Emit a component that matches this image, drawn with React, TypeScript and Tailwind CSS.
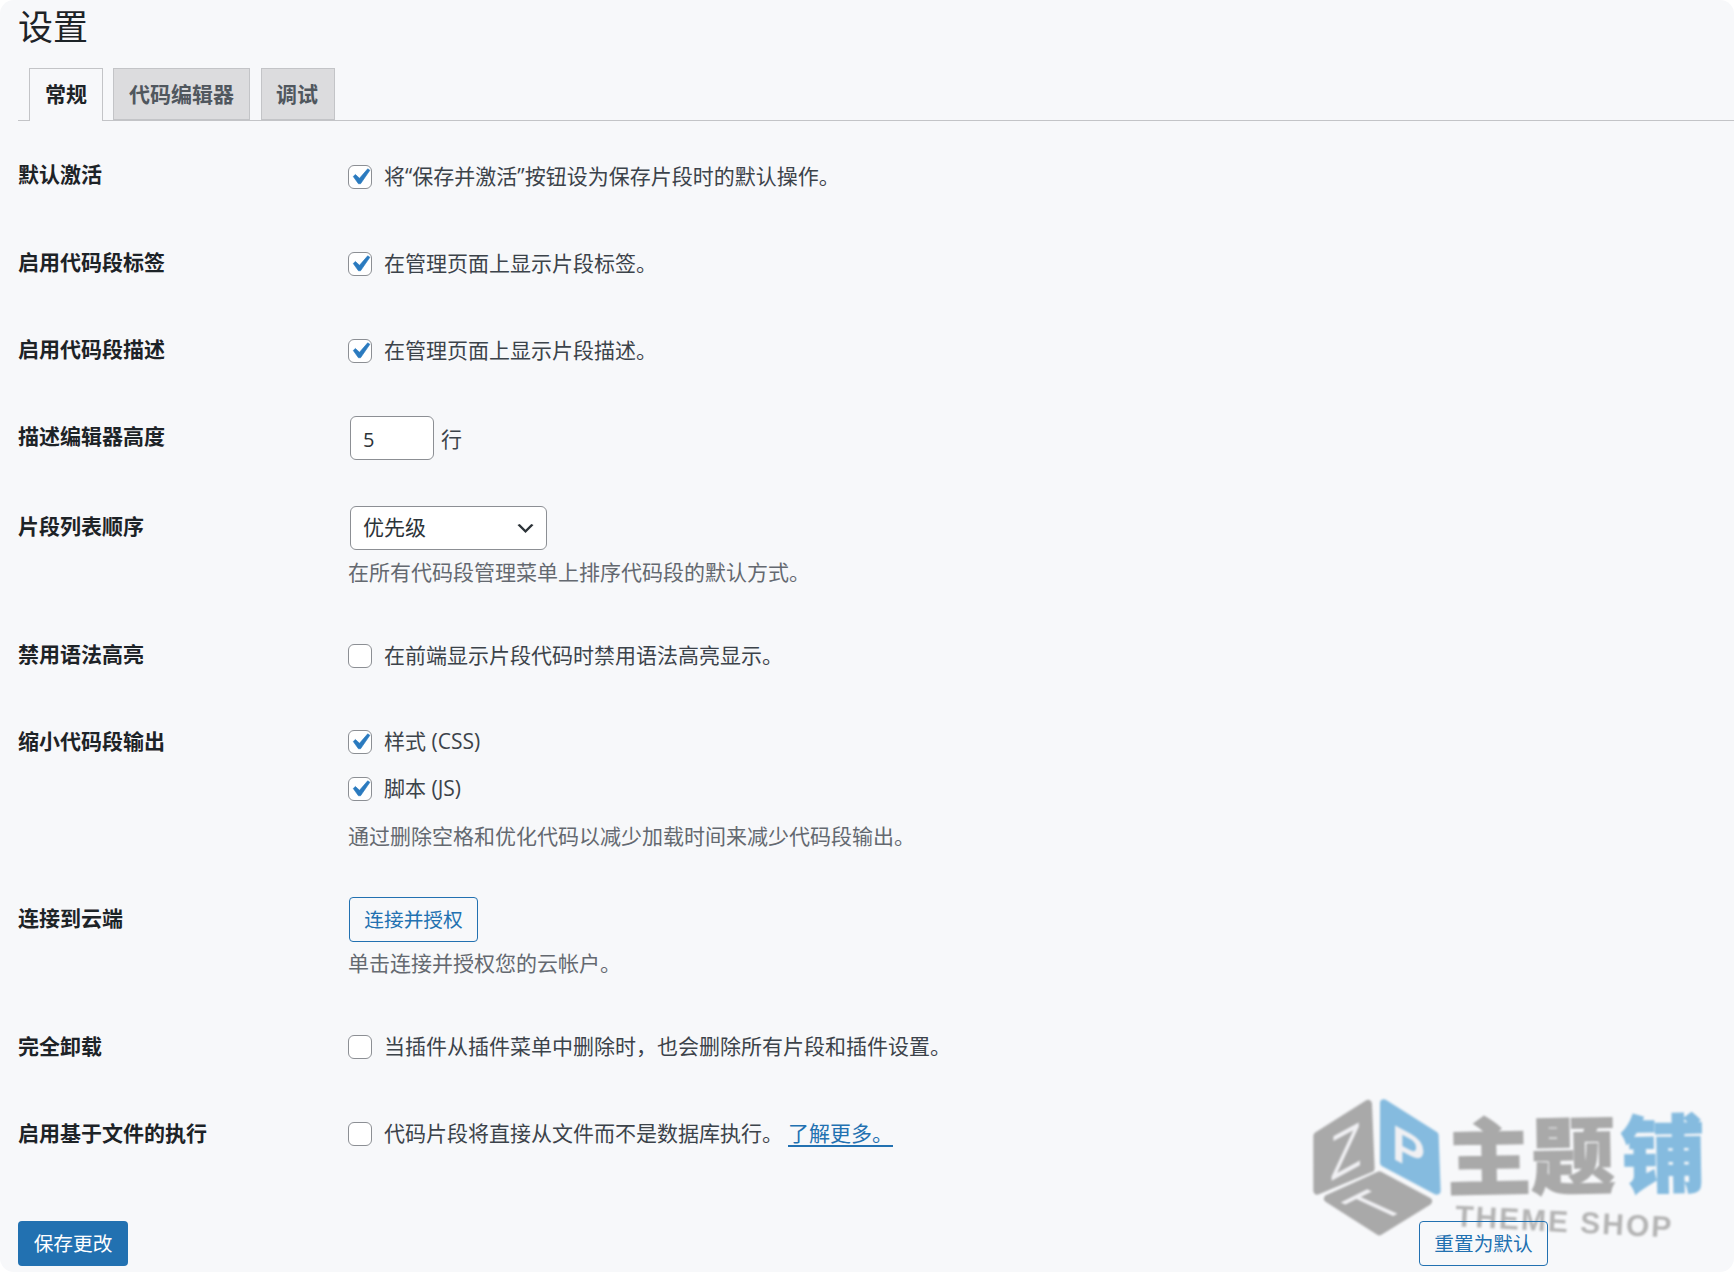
import type { ReactNode } from "react";

function Check({ on = false }: { on?: boolean }) {
  return (
    <span className="mr-[12px] flex h-[24px] w-[24px] shrink-0 items-center justify-center rounded-[6px] border border-[#8c8f94] bg-white">
      {on && (
        <svg viewBox="0 0 20 20" className="h-[32px] w-[32px] shrink-0 fill-[#2a7abf] stroke-[#2a7abf] stroke-[0.4]">
          <path d="M14.83 4.89l1.34.94-5.81 8.38H9.02L5.78 9.67l1.34-1.25 2.57 2.4z" />
        </svg>
      )}
    </span>
  );
}

function CheckLine({ on, children }: { on?: boolean; children: ReactNode }) {
  return (
    <div className="flex h-[30px] items-center text-[21px] leading-[30px] text-[#3c434a]">
      <Check on={on} />
      <span className="mb-[2px]">{children}</span>
    </div>
  );
}

function Row({
  label,
  className,
  labelClass,
  children,
}: {
  label: string;
  className: string;
  labelClass: string;
  children: ReactNode;
}) {
  return (
    <div className={`grid grid-cols-[330px_1fr] items-start ${className}`}>
      <div className={`text-[21px] font-bold leading-[30px] text-[#1d2327] ${labelClass}`}>{label}</div>
      <div>{children}</div>
    </div>
  );
}

function Help({ className, children }: { className: string; children: ReactNode }) {
  return <p className={`text-[21px] leading-[30px] text-[#646970] ${className}`}>{children}</p>;
}

function Watermark() {
  return (
    <div className="pointer-events-none absolute left-[1280px] top-[1060px] h-[212px] w-[454px] blur-[0.8px]">
      <svg viewBox="0 0 1362 636" className="absolute left-0 top-0 h-[212px] w-[454px]">
        <g strokeLinejoin="round" strokeWidth="24">
          <path d="M112 228 L264 132 L272 325 L112 392 Z" fill="#a9a9a9" stroke="#a9a9a9" />
          <path d="M312 130 L464 226 L470 392 L312 308 Z" fill="#85bbdf" stroke="#85bbdf" />
          <path d="M298 346 L444 424 L298 514 L144 416 Z" fill="#a9a9a9" stroke="#a9a9a9" />
        </g>
        <g fontFamily="'Liberation Sans', sans-serif" fontSize="100" fill="#f0f0f3">
          <text transform="matrix(1.55 -0.85 0 1.9 150 365)">Z</text>
          <text transform="matrix(1.5 0.8 0 1.5 335 294)" fontWeight="700">P</text>
          <text transform="matrix(1.4 -0.7 1.8 0.83 303 486)">T</text>
        </g>
      </svg>
      <div className="absolute left-[167px] top-[45px] flex -rotate-[1deg] text-[84px] font-black leading-[100px] [-webkit-text-stroke:1.5px_currentColor]">
        <span className="text-[#a9a9a9]">主题</span>
        <span className="ml-[6px] text-[#85bbdf]">铺</span>
      </div>
      <div className="absolute left-[175px] top-[142px] rotate-[3deg] whitespace-nowrap text-[30px] font-bold leading-[40px] tracking-[2px] text-[#b4b4b4] [font-family:'Liberation_Sans',sans-serif]">
        THEME SHOP
      </div>
    </div>
  );
}

export default function App() {
  return (
    <div className="bg-white">
      <div className="relative h-[1272px] w-[1734px] overflow-hidden rounded-[14px] bg-[#f7f8fa] [font-family:'Open_Sans','Noto_Sans_CJK_SC',sans-serif]">
        <Watermark />
        <div className="relative pl-[18px] pt-[7px]">
          <h1 className="text-[35px] font-normal leading-[40px] text-[#1d2327]">设置</h1>

          <div className="mb-[12px] mt-[21px] flex h-[53px] border-b border-[#c3c4c7] pl-[11px] text-[21px] font-bold leading-[50px]">
            <div className="h-[53px] border border-b-0 border-[#c3c4c7] bg-[#f7f8fa] px-[15px] text-[#1d2327]">常规</div>
            <div className="ml-[10px] h-[52px] border border-[#c3c4c7] bg-[#dcdcde] px-[15px] text-[#50575e]">代码编辑器</div>
            <div className="ml-[11px] h-[52px] border border-[#c3c4c7] bg-[#dcdcde] pl-[14px] pr-[16px] text-[#50575e]">调试</div>
          </div>

          <Row label="默认激活" className="pb-[28px] pt-[29px]" labelClass="-mt-[3px]">
            <CheckLine on>将“保存并激活”按钮设为保存片段时的默认操作。</CheckLine>
          </Row>
          <Row label="启用代码段标签" className="pb-[28px] pt-[29px]" labelClass="-mt-[2px]">
            <CheckLine on>在管理页面上显示片段标签。</CheckLine>
          </Row>
          <Row label="启用代码段描述" className="pb-[28px] pt-[29px]" labelClass="-mt-[2px]">
            <CheckLine on>在管理页面上显示片段描述。</CheckLine>
          </Row>

          <Row label="描述编辑器高度" className="pb-[22px] pt-[22px]" labelClass="mt-[5px]">
            <div className="flex items-center text-[21px] text-[#3c434a]">
              <input
                readOnly
                value="5"
                className="ml-[2px] h-[44px] w-[84px] rounded-[6px] border border-[#8c8f94] bg-white px-[12px] pt-[2px] text-[20px] text-[#2c3338] outline-none"
              />
              <span className="ml-[7px] mt-[4px]">行</span>
            </div>
          </Row>

          <Row label="片段列表顺序" className="pb-[25px] pt-[24px]" labelClass="mt-[5px]">
            <div className="ml-[2px] flex h-[44px] w-[197px] items-center justify-between rounded-[6px] border border-[#8c8f94] bg-white pl-[12px] pr-[9px] text-[21px] text-[#2c3338]">
              <span>优先级</span>
              <svg viewBox="0 0 20 20" className="h-[23px] w-[23px] fill-[#2c3338]">
                <path d="M5 6l5 5 5-5 2 1-7 7-7-7 2-1z" />
              </svg>
            </div>
            <Help className="mt-[7px]">在所有代码段管理菜单上排序代码段的默认方式。</Help>
          </Row>

          <Row label="禁用语法高亮" className="pb-[28px] pt-[29px]" labelClass="-mt-[2px]">
            <CheckLine>在前端显示片段代码时禁用语法高亮显示。</CheckLine>
          </Row>

          <Row label="缩小代码段输出" className="pb-[20px] pt-[28px]" labelClass="-mt-[1px]">
            <CheckLine on>样式 (CSS)</CheckLine>
            <div className="mt-[17px]">
              <CheckLine on>脚本 (JS)</CheckLine>
            </div>
            <Help className="mt-[17px]">通过删除空格和优化代码以减少加载时间来减少代码段输出。</Help>
          </Row>

          <Row label="连接到云端" className="pb-[25px] pt-[26px]" labelClass="mt-[6px]">
            <button className="ml-[1px] block h-[45px] w-[129px] rounded-[4px] border border-[#2271b1] text-[19.7px] text-[#2271b1]">
              连接并授权
            </button>
            <Help className="mt-[6px]">单击连接并授权您的云帐户。</Help>
          </Row>

          <Row label="完全卸载" className="pb-[28px] pt-[29px]" labelClass="-mt-[1px]">
            <CheckLine>当插件从插件菜单中删除时，也会删除所有片段和插件设置。</CheckLine>
          </Row>
          <Row label="启用基于文件的执行" className="pb-[28px] pt-[29px]" labelClass="-mt-[1px]">
            <CheckLine>
              代码片段将直接从文件而不是数据库执行。
              <a className="ml-[5px] text-[#2271b1] underline decoration-2 underline-offset-4">了解更多。</a>
            </CheckLine>
          </Row>

          <div className="flex items-center justify-between pr-[186px] pt-[44px] text-[19.7px]">
            <button className="h-[45px] w-[110px] rounded-[4px] bg-[#2271b1] text-white">保存更改</button>
            <button className="h-[45px] w-[129px] rounded-[4px] border border-[#2271b1] text-[#2271b1]">重置为默认</button>
          </div>
        </div>
      </div>
    </div>
  );
}
